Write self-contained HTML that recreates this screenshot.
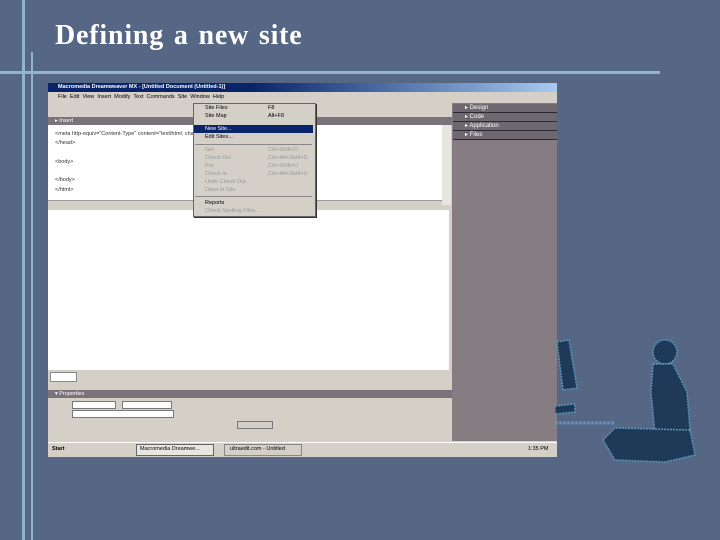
<!DOCTYPE html><html><head><style>
body{margin:0;width:720px;height:540px;background:#566785;position:relative;overflow:hidden;font-family:"Liberation Sans",sans-serif;}
.a{position:absolute}
.t{font-family:"Liberation Serif",serif;font-weight:bold;color:#fff;font-size:28px;left:55px;top:20px;letter-spacing:0.8px;word-spacing:2px}
.s{font-size:5.5px;color:#000;white-space:nowrap}
.m{position:absolute;left:205px;font-size:5.5px;white-space:nowrap;color:#000}
.g{color:#999}
.ph{background:#6e6870;border-bottom:1px solid #2a2a30;color:#fff;font-size:6px;height:8px;line-height:8px;padding-left:12px}
</style></head><body>
<div class="a" style="left:22px;top:0;width:3px;height:540px;background:#8fb4cc"></div>
<div class="a" style="left:31px;top:52px;width:2px;height:488px;background:#8fb4cc"></div>
<div class="a" style="left:0;top:71px;width:660px;height:3px;background:#8fb4cc"></div>
<div class="a t">Defining a new site</div>

<div class="a" style="left:48px;top:83px;width:509px;height:373px;background:#d4d0c8"></div>
<div class="a" style="left:48px;top:83px;width:509px;height:9px;background:linear-gradient(90deg,#0a246a 40%,#a6caf0)"></div>
<div class="a s" style="left:58px;top:84px;color:#fff;font-weight:bold">Macromedia Dreamweaver MX - [Untitled Document (Untitled-1)]</div>
<div class="a s" style="left:58px;top:94px">File &nbsp;Edit &nbsp;View &nbsp;Insert &nbsp;Modify &nbsp;Text &nbsp;Commands &nbsp;Site &nbsp;Window &nbsp;Help</div>
<div class="a" style="left:48px;top:117px;width:404px;height:8px;background:#7a747a"></div>
<div class="a s" style="left:55px;top:118px;color:#fff">▸ Insert</div>
<div class="a" style="left:48px;top:125px;width:394px;height:75px;background:#fff"></div>
<div class="a s" style="left:55px;top:130px;line-height:9.3px;color:#333">&lt;meta http-equiv="Content-Type" content="text/html; charset=iso-8859-1"&gt;<br>&lt;/head&gt;<br><br>&lt;body&gt;<br><br>&lt;/body&gt;<br>&lt;/html&gt;</div>
<div class="a" style="left:442px;top:125px;width:9px;height:80px;background:#e8e6e0"></div>
<div class="a" style="left:48px;top:200px;width:394px;height:8px;background:#d4d0c8;border-top:1px solid #999"></div>
<div class="a" style="left:48px;top:210px;width:401px;height:160px;background:#fff"></div>
<div class="a" style="left:50px;top:372px;width:25px;height:8px;background:#fff;border:1px solid #888"></div>
<div class="a" style="left:48px;top:390px;width:404px;height:8px;background:#7a747a"></div>
<div class="a s" style="left:55px;top:391px;color:#fff">▾ Properties</div>
<div class="a" style="left:72px;top:401px;width:42px;height:6px;background:#fff;border:1px solid #777"></div>
<div class="a" style="left:122px;top:401px;width:48px;height:6px;background:#fff;border:1px solid #777"></div>
<div class="a" style="left:72px;top:410px;width:100px;height:6px;background:#fff;border:1px solid #777"></div>
<div class="a" style="left:237px;top:421px;width:34px;height:6px;border:1px solid #777"></div>
<div class="a" style="left:48px;top:442px;width:509px;height:14px;background:#d4d0c8;border-top:1px solid #fff"></div>
<div class="a" style="left:136px;top:444px;width:76px;height:10px;background:#e8e6e0;border:1px solid #666"></div>
<div class="a" style="left:224px;top:444px;width:76px;height:10px;border:1px solid #888"></div>
<div class="a s" style="left:140px;top:446px">Macromedia Dreamwe...</div>
<div class="a s" style="left:230px;top:446px">ultraedit.com - Untitled</div>
<div class="a s" style="left:52px;top:446px;font-weight:bold">Start</div>
<div class="a s" style="left:528px;top:446px">1:35 PM</div>
<div class="a" style="left:452px;top:103px;width:105px;height:338px;background:#857d82"></div>
<div class="a" style="left:453px;top:104px;width:104px"><div class="ph">▸ Design</div><div class="ph">▸ Code</div><div class="ph">▸ Application</div><div class="ph">▸ Files</div></div>

<div class="a" style="left:193px;top:103px;width:121px;height:112px;background:#d4d0c8;border:1px solid #666;box-shadow:1px 1px 0 #333"></div>
<div class="a" style="left:194px;top:125px;width:119px;height:8px;background:#0a246a"></div>
<div class="a" style="left:195px;top:144px;width:117px;height:1px;background:#888"></div>
<div class="a" style="left:195px;top:196px;width:117px;height:1px;background:#888"></div>
<div class="m" style="top:105px">Site Files</div><div class="m" style="left:268px;top:105px">F8</div>
<div class="m" style="top:113px">Site Map</div><div class="m" style="left:268px;top:113px">Alt+F8</div>
<div class="m" style="top:126px;color:#fff">New Site...</div>
<div class="m" style="top:134px">Edit Sites...</div>
<div class="m g" style="top:147px">Get</div><div class="m g" style="left:268px;top:147px">Ctrl+Shift+D</div>
<div class="m g" style="top:155px">Check Out</div><div class="m g" style="left:268px;top:155px">Ctrl+Alt+Shift+D</div>
<div class="m g" style="top:163px">Put</div><div class="m g" style="left:268px;top:163px">Ctrl+Shift+U</div>
<div class="m g" style="top:171px">Check In</div><div class="m g" style="left:268px;top:171px">Ctrl+Alt+Shift+U</div>
<div class="m g" style="top:179px">Undo Check Out</div>
<div class="m g" style="top:187px">Open in Site</div>
<div class="m" style="top:200px">Reports</div>
<div class="m g" style="top:208px">Check Spelling Files...</div>

<svg class="a" style="left:555px;top:330px" width="165" height="150">
<g fill="#1f3a58" stroke="#5a93b8" stroke-width="1.5" stroke-dasharray="2 1">
<circle cx="110" cy="22" r="12"/>
<path d="M98 34 L118 34 L132 62 L135 100 L118 108 L100 104 L96 62Z"/>
<path d="M48 110 L60 98 L135 100 L140 125 L110 132 L60 130 Z"/>
<path d="M2 12 L14 10 L22 58 L8 60Z"/>
<path d="M0 76 L20 74 L20 82 L0 84Z"/>
</g>
<path d="M0 93 L60 93" stroke="#5a93b8" stroke-width="3" stroke-dasharray="3 1"/>
<path d="M0 82 L0 105" stroke="#5a93b8" stroke-width="1"/>
</svg>
</body></html>
